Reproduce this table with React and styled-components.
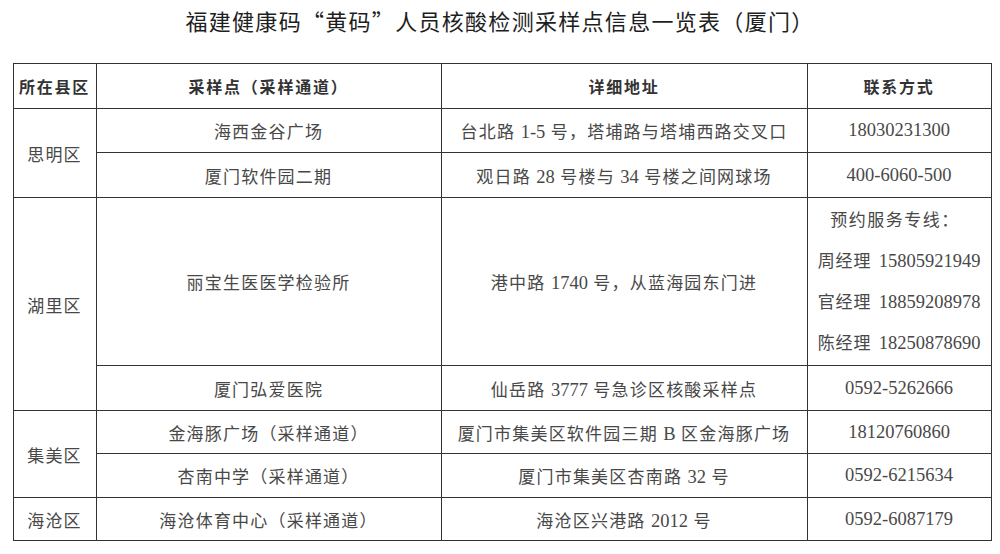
import React from 'react';
import styled, { createGlobalStyle } from 'styled-components';

const GlobalStyle = createGlobalStyle`
  html, body {
    margin: 0;
    padding: 0;
    background: #ffffff;
  }
  body {
    font-family: "Liberation Serif", "Noto Sans CJK SC", serif;
    color: #444;
  }
`;

const Page = styled.div`
  width: 1000px;
  height: 554px;
  overflow: hidden;
  display: flex;
  flex-direction: column;
  align-items: center;
`;

const Title = styled.h1`
  margin: 0 0 23px;
  height: 40px;
  line-height: 40px;
  font-family: "Noto Sans CJK SC", sans-serif;
  font-size: 22px;
  font-weight: 400;
  letter-spacing: 1.3px;
  color: #1e1e1e;
  text-align: center;
`;

const Table = styled.table`
  width: 978px;
  margin-left: 4px;
  border-collapse: collapse;
  table-layout: fixed;
  border: 1.5px solid #222;
`;

const Row = styled.tr`
  height: ${p => p.$h}px;
`;

const HeadCell = styled.th`
  border: 1px solid #333;
  padding: 0;
  font-family: "Liberation Serif", "Noto Sans CJK SC", serif;
  font-size: 16px;
  font-weight: 700;
  letter-spacing: 1.8px;
  color: #333;
  text-align: center;
  vertical-align: middle;
`;

const Cell = styled.td`
  border: 1px solid #333;
  padding: 0;
  font-size: 17px;
  letter-spacing: 1.2px;
  color: #484848;
  text-align: center;
  vertical-align: middle;
  white-space: nowrap;
`;

const Num = styled.span`
  font-size: 18.5px;
  letter-spacing: 0;
`;

const ContactList = styled.div`
  display: flex;
  flex-direction: column;
  align-items: center;
`;

const ContactLine = styled.div`
  line-height: 41px;
  letter-spacing: 1.5px;
  padding-right: ${p => (p.$label ? '8px' : '0')};
`;

const Manager = styled.span`
  letter-spacing: 1px;
  margin-right: 7px;
`;

// wrap runs of digits / latin so they get the larger serif size
const withNums = text =>
  text.split(/([0-9A-Z-]+)/).map((part, i) =>
    /^[0-9A-Z-]+$/.test(part) ? <Num key={i}>{part}</Num> : part
  );

const rows = [
  { district: '思明区', span: 2, h: 44, site: '海西金谷广场', addr: '台北路 1-5 号，塔埔路与塔埔西路交叉口', tel: '18030231300' },
  { h: 45, site: '厦门软件园二期', addr: '观日路 28 号楼与 34 号楼之间网球场', tel: '400-6060-500' },
  {
    district: '湖里区', span: 2, h: 168, site: '丽宝生医医学检验所', addr: '港中路 1740 号，从蓝海园东门进',
    contacts: [
      ['周经理', '15805921949'],
      ['官经理', '18859208978'],
      ['陈经理', '18250878690'],
    ],
  },
  { h: 45, site: '厦门弘爱医院', addr: '仙岳路 3777 号急诊区核酸采样点', tel: '0592-5262666' },
  { district: '集美区', span: 2, h: 43, site: '金海豚广场（采样通道）', addr: '厦门市集美区软件园三期 B 区金海豚广场', tel: '18120760860' },
  { h: 44, site: '杏南中学（采样通道）', addr: '厦门市集美区杏南路 32 号', tel: '0592-6215634' },
  { district: '海沧区', span: 1, h: 43, site: '海沧体育中心（采样通道）', addr: '海沧区兴港路 2012 号', tel: '0592-6087179' },
];

const App = () => (
  <Page>
    <GlobalStyle />
    <Title>福建健康码“黄码”人员核酸检测采样点信息一览表（厦门）</Title>
    <Table>
      <colgroup>
        <col style={{ width: 83 }} />
        <col style={{ width: 345 }} />
        <col style={{ width: 366 }} />
        <col style={{ width: 184 }} />
      </colgroup>
      <thead>
        <Row $h={45}>
          <HeadCell>所在县区</HeadCell>
          <HeadCell>采样点（采样通道）</HeadCell>
          <HeadCell>详细地址</HeadCell>
          <HeadCell>联系方式</HeadCell>
        </Row>
      </thead>
      <tbody>
        {rows.map((r, i) => (
          <Row key={i} $h={r.h}>
            {r.district && <Cell rowSpan={r.span}>{r.district}</Cell>}
            <Cell>{r.site}</Cell>
            <Cell>{withNums(r.addr)}</Cell>
            {r.contacts ? (
              <Cell>
                <ContactList>
                  <ContactLine $label>预约服务专线：</ContactLine>
                  {r.contacts.map(([name, tel]) => (
                    <ContactLine key={tel}>
                      <Manager>{name}</Manager>
                      <Num>{tel}</Num>
                    </ContactLine>
                  ))}
                </ContactList>
              </Cell>
            ) : (
              <Cell>
                <Num>{r.tel}</Num>
              </Cell>
            )}
          </Row>
        ))}
      </tbody>
    </Table>
  </Page>
);

export default App;
